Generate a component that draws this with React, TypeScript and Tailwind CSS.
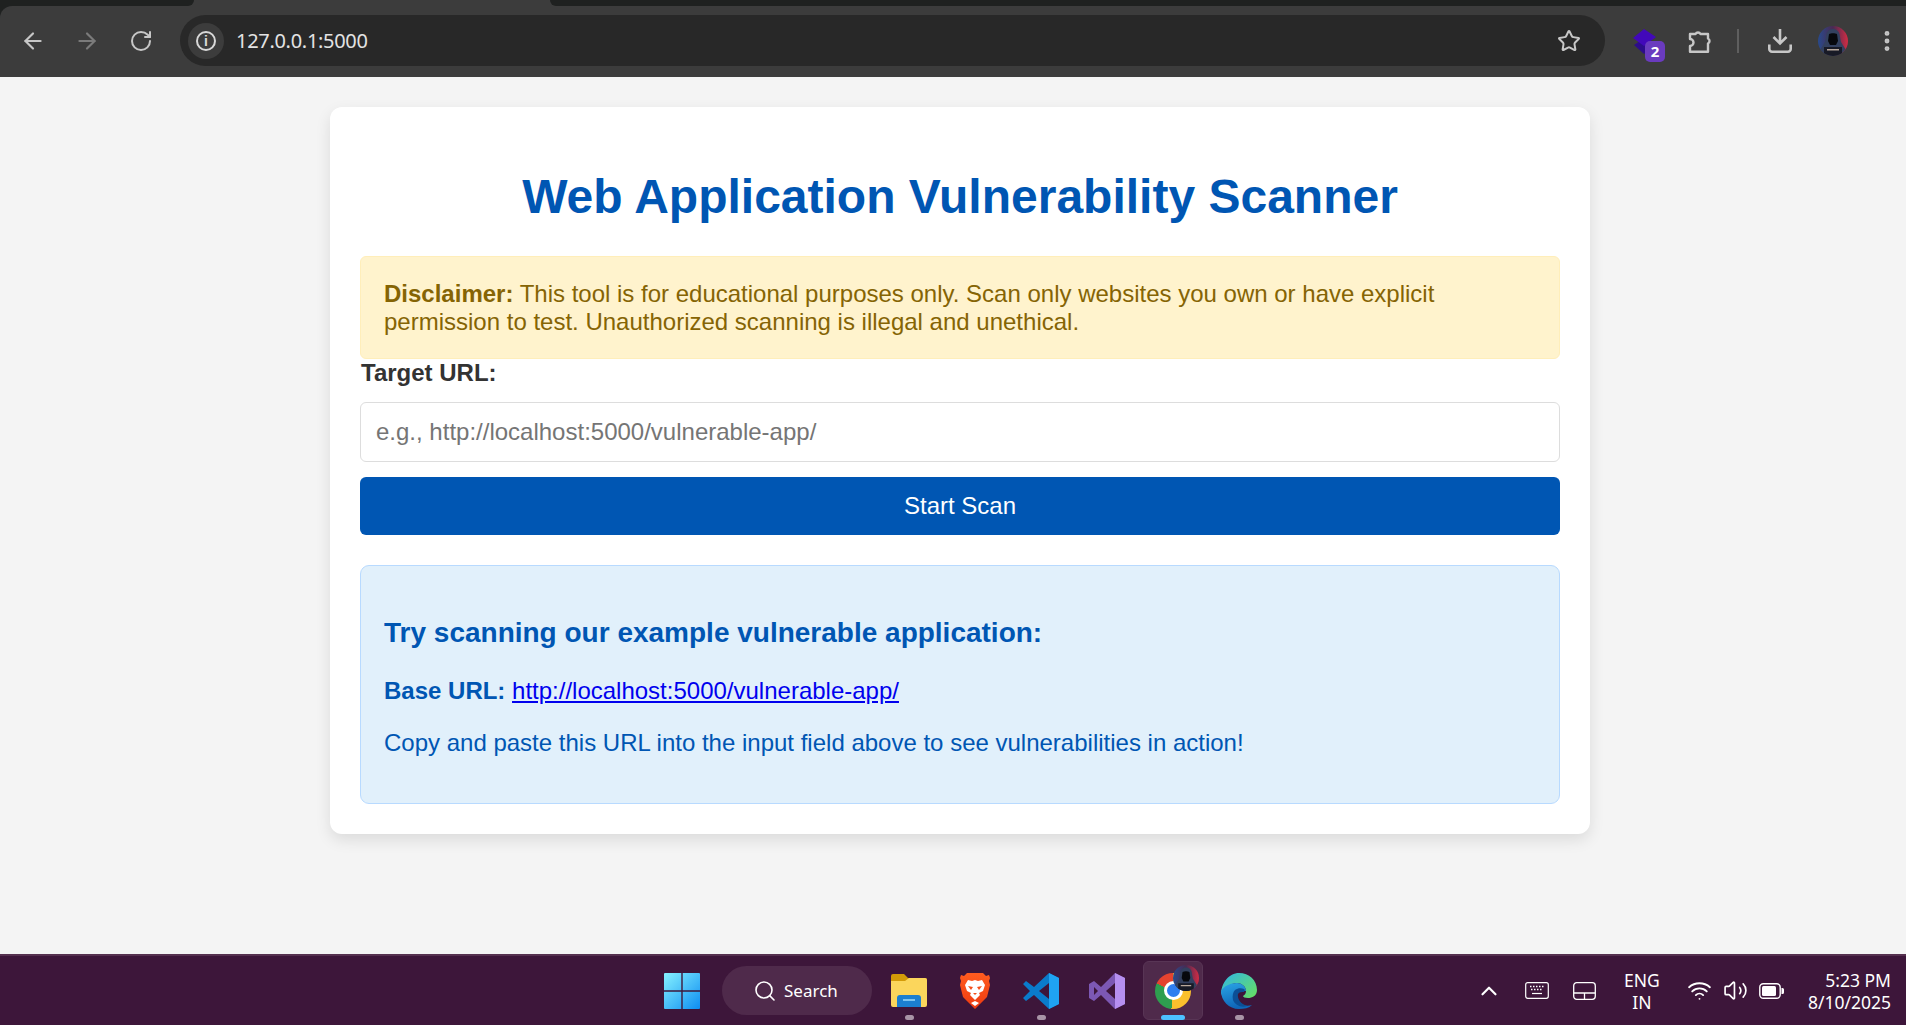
import { ArrowLeft, ArrowRight, ChevronUp, EllipsisVertical, RotateCw, Search, Star, Volume2, Wifi } from "lucide-react";

const WinLogo = () => (
  <svg width="36" height="36" viewBox="0 0 36 36">
    <defs>
      <linearGradient id="win" x1="0" y1="0" x2="1" y2="1">
        <stop offset="0" stopColor="#86f2ff" />
        <stop offset="1" stopColor="#0d8df2" />
      </linearGradient>
    </defs>
    <path fill="url(#win)" d="M1 0h16.300v17.300H0V1a1 1 0 0 1 1-1zM18.700 0H35a1 1 0 0 1 1 1v16.300H18.700zM0 18.700h17.300V36H1a1 1 0 0 1-1-1zM18.700 18.700H36V35a1 1 0 0 1-1 1H18.700z" />
  </svg>
);

const ExplorerLogo = () => (
  <svg width="36" height="34" viewBox="0 0 36 34">
    <path fill="#d49b08" d="M0 2a2 2 0 0 1 2-2h11l4 4h17a2 2 0 0 1 2 2v6H0z" />
    <path fill="#fbd65c" d="M0 7h14l4-3h16a2 2 0 0 1 2 2v25a2 2 0 0 1-2 2H2a2 2 0 0 1-2-2z" />
    <path fill="#1b7fd0" d="M6 33V24a3 3 0 0 1 3-3h18a3 3 0 0 1 3 3v9z" />
    <rect x="12" y="25" width="12" height="2" fill="#7cc4f0" />
  </svg>
);

const BraveLogo = () => (
  <svg width="30" height="36" viewBox="0 0 30 36">
    <defs>
      <linearGradient id="brave" x1="0" y1="0" x2="0" y2="1">
        <stop offset="0" stopColor="#ff5c1f" />
        <stop offset="1" stopColor="#ee3a10" />
      </linearGradient>
    </defs>
    <path fill="url(#brave)" d="M7 0h16l3 3 3-1 1 3-1 3 1 4-3 12-7 7-5 5-5-5-7-7L0 12l1-4-1-3 1-3 3 1z" />
    <path fill="#fff" d="M8 7l4 1 3-1 3 1 4-1 3 5-2 6-4 2 1 2-5 5-5-5 1-2-4-2-2-6z" />
    <path fill="#f4501b" d="M8 13l5 1-2 3zM22 13l-5 1 2 3zM13 20h4l-2 2z" />
    <path fill="#fff" d="M11 30l4-2 4 2-4 3z" />
  </svg>
);

const VsCodeLogo = () => (
  <svg width="36" height="36" viewBox="0 0 36 36">
    <path fill="#0a7bcb" fillRule="evenodd" d="M26 0L36 5V31L26 36 11 22 3 28 0 25 7 18 0 11 3 8 11 14zM26 10L16 18 26 26z" />
    <path fill="#1fa3f2" d="M26 0L36 5V31L26 36z" />
  </svg>
);

const VsLogo = () => (
  <svg width="36" height="36" viewBox="0 0 36 36">
    <path fill="#7c58b4" fillRule="evenodd" d="M26 0L36 5V31L26 36 12 22 5 28 0 25V11L5 8 12 14zM26 10L17 18 26 26zM5 14V22L9 18z" />
    <path fill="#b68ff0" d="M26 0L36 5V31L26 36z" />
  </svg>
);

const ChromeLogo = () => (
  <div className="relative w-[36px] h-[36px]">
    <div className="w-[36px] h-[36px] rounded-full bg-[conic-gradient(#fbc02d_65deg_185deg,#2e9e4f_185deg_295deg,#e5432f_295deg_360deg,#e5432f_0deg_65deg)] flex items-center justify-center">
      <div className="w-[19px] h-[19px] rounded-full bg-[#2f7ef0] border-[3px] border-white" />
    </div>
    <div className="absolute right-[-8px] top-[-8px] flex">
      <Avatar size={26} idSuffix="task" />
    </div>
  </div>
);

const EdgeLogo = () => (
  <svg width="36" height="36" viewBox="0 0 36 36">
    <defs>
      <linearGradient id="edge1" x1="0" y1="0" x2="1" y2="0.800">
        <stop offset="0" stopColor="#2fb6e8" />
        <stop offset="1" stopColor="#63dc6a" />
      </linearGradient>
      <linearGradient id="edge2" x1="0" y1="0" x2="0.300" y2="1">
        <stop offset="0" stopColor="#2aa5e6" />
        <stop offset="1" stopColor="#0f66b8" />
      </linearGradient>
    </defs>
    <path fill="url(#edge1)" d="M18 0c10 0 18 7 18 17 0 6-5 8-9 8-3 0-5-1-5-2 2-1 3-3 3-5 0-5-5-8-9-8-7 0-13 5-16 12 0-12 8-22 18-22z" />
    <path fill="url(#edge2)" d="M16 10c4 0 9 3 9 8h-9c-3 5 0 12 6 14 3 1 6 1 9 0-3 3-8 4-13 4C8 36 0 28 0 18 3 13 9 10 16 10z" />
    <path fill="#0b4f96" d="M14 17c3-2 6-2 9-1 1 1 1 1 0 3-2 0-5 0-6 2-1 5 3 10 9 12-6 2-12-1-14-6-1-4 0-8 2-10z" />
  </svg>
);

const Avatar = ({ size = 30, idSuffix = "bar" }: { size?: number; idSuffix?: string }) => (
  <svg width={size} height={size} viewBox="0 0 30 30" className="rounded-full">
    <defs>
      <linearGradient id={`av-${idSuffix}`} x1="0" y1="0" x2="1" y2="0">
        <stop offset="0" stopColor="#284a8c" />
        <stop offset="0.5" stopColor="#4a2a52" />
        <stop offset="1" stopColor="#d22c44" />
      </linearGradient>
    </defs>
    <rect width="30" height="30" fill={`url(#av-${idSuffix})`} />
    <path fill="#33405f" d="M15 3c4 0 7 3 7 8l1 5 5 8v6H2v-6l5-8 1-5c0-5 3-8 7-8z" />
    <path fill="#07080d" d="M11 8c2-1 6-1 8 0l1 7-2 4h-6l-2-4z" />
    <path fill="#181a26" d="M6 21h18v9H6z" />
    <path fill="#b8a89c" d="M9 23h12v1.500H9z" />
  </svg>
);

const ExtensionIcon = () => (
  <div className="relative w-[32px] h-[34px] shrink-0">
    <svg width="23" height="25" viewBox="0 0 23 25" className="mt-[5px]">
      <path fill="#2d0c8c" d="M10 10l12 6-11 9L1 16z" />
      <path fill="#4208ba" d="M11 0l12 8-12 9L0 9z" />
    </svg>
    <div className="absolute right-0 bottom-[-4px] w-[20px] h-[21px] rounded-[5px] bg-[#6a3bbf] text-white text-[15px] font-bold leading-[21px] text-center font-['Noto_Sans',sans-serif]">
      2
    </div>
  </div>
);

const PuzzleIcon = () => (
  <svg width="25" height="24" viewBox="0 0 25 24" fill="none" stroke="#c7c7c7" strokeWidth="2.400" strokeLinejoin="round" className="shrink-0">
    <path d="M2 5H7.500a2.800 2.800 0 0 1 5 0H20V9.500a2.800 2.800 0 0 1 0 5V22.800H2V17a3.500 3.500 0 0 0 0-7z" />
  </svg>
);

const DownloadIcon = () => (
  <svg width="24" height="24" viewBox="0 0 24 24" fill="none" stroke="#c7c7c7" strokeWidth="2.600" className="shrink-0">
    <path d="M12 0v14M5.500 8l6.500 6.500L18.500 8" />
    <path d="M1.300 15.500V20a2.700 2.700 0 0 0 2.700 2.700h16a2.700 2.700 0 0 0 2.700-2.700v-4.500" />
  </svg>
);

const Keyboard = () => (
  <svg width="24" height="17" viewBox="0 0 24 17" fill="none" stroke="#fff" strokeWidth="1.200">
    <rect x="0.700" y="0.700" width="22.600" height="15.600" rx="2" />
    <path d="M7 11.500h10" />
    <path strokeWidth="1.500" strokeDasharray="1.500 1.500" d="M5 4.500h14M6 7.500h12" />
  </svg>
);

const Touchpad = () => (
  <svg width="23" height="18" viewBox="0 0 23 18" fill="none" stroke="#fff" strokeWidth="1.300">
    <rect x="0.700" y="0.700" width="21.600" height="16.600" rx="3" />
    <path d="M1 11h21M11.500 11v6" />
  </svg>
);

const Battery = () => (
  <svg width="25" height="16" viewBox="0 0 25 16">
    <rect x="0.800" y="0.800" width="20.400" height="14.400" rx="3.500" fill="none" stroke="#fff" strokeWidth="1.400" />
    <rect x="3" y="3" width="14" height="10" rx="1.500" fill="#fff" />
    <path fill="#fff" d="M22.500 5h1a1.500 1.500 0 0 1 1.500 1.500v3a1.500 1.500 0 0 1-1.500 1.500h-1z" />
  </svg>
);

const BrowserBar = () => (
  <header className="h-[77px] shrink-0 bg-[#1f2120] flex flex-col">
    <div className="h-[6px] flex bg-[#3c3c3c]">
      <div className="w-[194px] bg-[#1f2120] rounded-br-[6px]" />
      <div className="w-[356px]" />
      <div className="flex-1 bg-[#1f2120] rounded-bl-[6px]" />
    </div>
    <div className="flex-1 flex items-center pb-[2px] pl-[20px] rounded-tl-[12px] bg-[#3c3c3c]">
      <ArrowLeft size={26} strokeWidth={2} className="shrink-0 text-[#c7c7c7]" />
      <ArrowRight size={26} strokeWidth={2} className="shrink-0 text-[#7b7b7b] ml-[28px]" />
      <RotateCw size={24} strokeWidth={2} className="shrink-0 text-[#c7c7c7] ml-[29px]" />
      <div className="ml-[27px] h-[51px] w-[1425px] shrink-0 rounded-full bg-[#282828] flex items-center pl-[8px] pr-[24px]">
        <div className="w-[36px] h-[36px] rounded-full bg-[#3c3c3c] flex items-center justify-center">
          <div className="w-[20px] h-[20px] rounded-full border-2 border-[#d8d8d8] text-[#d8d8d8] text-[14px] font-bold leading-[16px] text-center font-['Liberation_Sans',sans-serif]">
            i
          </div>
        </div>
        <span className="ml-[12px] text-[20px] tracking-[-0.3px] text-[#e3e3e3] font-['Noto_Sans',sans-serif]">127.0.0.1:5000</span>
        <Star size={24} strokeWidth={2} className="ml-auto text-[#c7c7c7]" />
      </div>
      <div className="ml-[28px] flex items-center">
        <ExtensionIcon />
        <div className="ml-[23px] flex"><PuzzleIcon /></div>
        <div className="ml-[24px] w-[2px] h-[24px] bg-[#5f5f5f] shrink-0" />
        <div className="ml-[29px] flex"><DownloadIcon /></div>
        <div className="ml-[26px] flex"><Avatar /></div>
        <EllipsisVertical size={26} strokeWidth={2.500} className="shrink-0 ml-[26px] text-[#c7c7c7]" />
      </div>
    </div>
  </header>
);

const TaskItem = ({ children, dot, active }: { children: React.ReactNode; dot?: boolean; active?: boolean }) => (
  <div className="relative w-[66px] h-[60px] shrink-0 flex items-center justify-center">
    {active && <div className="absolute left-[3px] top-0 w-[60px] h-[59px] rounded-[6px] bg-[#4f2a4b] border border-[#583555]" />}
    <div className="relative flex">{children}</div>
    {dot && <div className="absolute left-[29px] bottom-[1px] w-[9px] h-[5px] rounded-full bg-[#a894a6]" />}
    {active && <div className="absolute left-[21px] bottom-[1px] w-[24px] h-[5px] rounded-full bg-[#4cc2ff]" />}
  </div>
);

const Taskbar = () => (
  <footer className="h-[71px] shrink-0 bg-[#3d163a] border-t-[2px] border-[#55304f] flex items-center pl-[664px] pr-[15px] text-white font-['Noto_Sans',sans-serif]">
    <div className="w-[36px] flex shrink-0"><WinLogo /></div>
    <div className="ml-[22px] w-[150px] h-[49px] shrink-0 rounded-full bg-[#4f2a4b] flex items-center pl-[31px] gap-[7px]">
      <Search size={24} strokeWidth={1.600} />
      <span className="text-[17px]">Search</span>
    </div>
    <div className="ml-[4px] flex">
      <TaskItem dot><ExplorerLogo /></TaskItem>
      <TaskItem><BraveLogo /></TaskItem>
      <TaskItem dot><VsCodeLogo /></TaskItem>
      <TaskItem><VsLogo /></TaskItem>
      <TaskItem active><ChromeLogo /></TaskItem>
      <TaskItem dot><EdgeLogo /></TaskItem>
    </div>
    <div className="ml-auto flex items-center">
      <ChevronUp size={26} strokeWidth={2} />
      <div className="ml-[23px]"><Keyboard /></div>
      <div className="ml-[24px]"><Touchpad /></div>
      <div className="ml-[26px] w-[40px] text-center text-[17.500px] leading-[22px]">
        <div>ENG</div>
        <div>IN</div>
      </div>
      <Wifi size={25} strokeWidth={1.800} className="ml-[25px]" />
      <Volume2 size={25} strokeWidth={1.600} className="ml-[11px]" />
      <div className="ml-[11px]"><Battery /></div>
      <div className="ml-[24px] text-right text-[17.500px] leading-[22px]">
        <div>5:23 PM</div>
        <div>8/10/2025</div>
      </div>
    </div>
  </footer>
);

export default function App() {
  return (
    <div className="h-[1025px] flex flex-col overflow-hidden bg-[#f4f4f4]">
      <BrowserBar />
      <main className="flex-1 font-['Liberation_Sans',Arial,sans-serif]">
        <div className="w-[1260px] mt-[30px] ml-[330px] bg-white rounded-[12px] shadow-[0_6px_15px_rgba(0,0,0,0.1)] p-[30px]">
          <h1 className="text-[48px] leading-[55px] font-bold text-[#0056b3] text-center mt-[32px] mb-[32px]">
            Web Application Vulnerability Scanner
          </h1>
          <div className="bg-[#fff3cd] text-[#856404] border border-[#ffeeba] rounded-[6px] px-[23px] py-[23px] text-[24px] leading-[27.6px]">
            <strong>Disclaimer:</strong> This tool is for educational purposes only. Scan only websites you own or have explicit permission to test. Unauthorized scanning is illegal and unethical.
          </div>
          <label className="block ml-[1px] mb-[15px] text-[24px] leading-[27.6px] font-bold text-[#333]">Target URL:</label>
          <input
            className="block w-full h-[60px] px-[15px] border-[1.5px] border-[#ddd] rounded-[6px] text-[24px] text-[#333] placeholder:text-[#757575] outline-none"
            placeholder="e.g., http://localhost:5000/vulnerable-app/"
          />
          <button className="block w-full h-[58px] mt-[15px] rounded-[6px] bg-[#0056b3] text-white text-[24px]">Start Scan</button>
          <div className="mt-[30px] bg-[#e1f0fb] border-[1.5px] border-[#b8daff] rounded-[9px] px-[23px] pt-[51px] pb-[46px] text-[#0056b3] text-[24px] leading-[27.6px]">
            <h3 className="text-[28px] leading-[32px] font-bold">Try scanning our example vulnerable application:</h3>
            <p className="mt-[28px]">
              <strong>Base URL:</strong>{" "}
              <a href="#" className="text-[#0000ee] underline">http://localhost:5000/vulnerable-app/</a>
            </p>
            <p className="mt-[25px]">Copy and paste this URL into the input field above to see vulnerabilities in action!</p>
          </div>
        </div>
      </main>
      <Taskbar />
    </div>
  );
}
